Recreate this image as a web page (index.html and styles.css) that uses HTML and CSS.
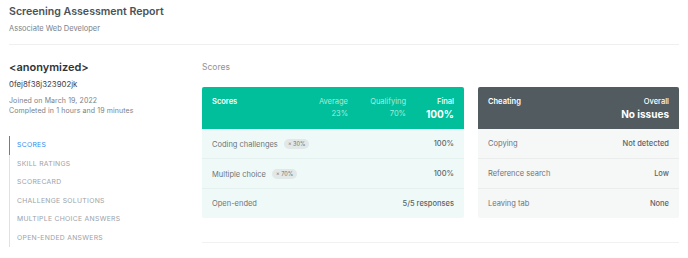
FILE: index.html
```html
<!DOCTYPE html>
<html lang="en">
<head>
    <meta charset="UTF-8">
    <meta name="viewport" content="width=device-width, initial-scale=1.0">
    <title>Screening Assessment Report</title>
    <link rel="stylesheet" href="styles.css">
</head>
<body>
    <div class="header">
        <h1>Screening Assessment Report</h1>
        <div class="role">Associate Web Developer</div>
    </div>

    <div class="main">
        <div class="sidebar">
            <div class="candidate">&lt;anonymized&gt;</div>
            <div class="candidate-id">0fej8f38j323902jk</div>
            <div class="meta">Joined on March 19, 2022</div>
            <div class="meta">Completed in 1 hours and 19 minutes</div>

            <ul class="nav">
                <li class="active">Scores</li>
                <li>Skill ratings</li>
                <li>Scorecard</li>
                <li>Challenge solutions</li>
                <li>Multiple choice answers</li>
                <li>Open-ended answers</li>
            </ul>
        </div>

        <div class="content">
            <div class="section-title">Scores</div>
            <div class="cards">
                <div class="card card-scores">
                    <div class="card-head">
                        <div class="head-label">Scores</div>
                        <div class="head-col">
                            <div>Average</div>
                            <div>23%</div>
                        </div>
                        <div class="head-col">
                            <div>Qualifying</div>
                            <div>70%</div>
                        </div>
                        <div class="head-col final">
                            <div>Final</div>
                            <div class="big">100%</div>
                        </div>
                    </div>
                    <div class="row">
                        <span>Coding challenges <span class="badge">× 30%</span></span>
                        <span class="value">100%</span>
                    </div>
                    <div class="row">
                        <span>Multiple choice <span class="badge">× 70%</span></span>
                        <span class="value">100%</span>
                    </div>
                    <div class="row">
                        <span>Open-ended</span>
                        <span class="value">5/5 responses</span>
                    </div>
                </div>

                <div class="card card-cheating">
                    <div class="card-head">
                        <div class="head-label">Cheating</div>
                        <div class="head-col final">
                            <div>Overall</div>
                            <div class="big">No issues</div>
                        </div>
                    </div>
                    <div class="row">
                        <span>Copying</span>
                        <span class="value">Not detected</span>
                    </div>
                    <div class="row">
                        <span>Reference search</span>
                        <span class="value">Low</span>
                    </div>
                    <div class="row">
                        <span>Leaving tab</span>
                        <span class="value">None</span>
                    </div>
                </div>
            </div>
            <div class="divider"></div>
        </div>
    </div>
</body>
</html>
```

FILE: styles.css
```css
body {
    margin: 0;
    padding: 0 9px;
    font-family: Inter, "Noto Sans", sans-serif;
    color: #4b5257;
    background: white;
}
.header {
    padding-top: 4px;
    padding-bottom: 10px;
    border-bottom: 1px solid #eeeff0;
    width: 670px;
}
h1 {
    margin: 0;
    font-size: 10.6px;
    line-height: 15px;
    font-weight: 600;
    color: #4b5257;
}
.role {
    margin-top: 5px;
    font-size: 7.5px;
    line-height: 10px;
    color: #7b8187;
}
.main {
    display: flex;
}
.sidebar {
    width: 193px;
    padding-top: 15px;
}
.candidate {
    font-size: 11px;
    line-height: 15px;
    font-weight: 600;
    color: #2f3438;
}
.candidate-id {
    margin-top: 4px;
    margin-bottom: 6px;
    font-size: 7.8px;
    line-height: 11px;
    color: #3d4247;
}
.meta {
    font-size: 7px;
    line-height: 10px;
    letter-spacing: 0.1px;
    color: #7b8187;
}
.nav {
    list-style: none;
    margin: 20px 0 0;
    padding: 0;
    border-left: 1px solid #dfe2e4;
}
.nav li {
    padding: 0 0 0 7px;
    height: 18.5px;
    line-height: 18.5px;
    font-size: 6.8px;
    text-transform: uppercase;
    letter-spacing: 0.3px;
    color: #9ca1a6;
}
.nav li.active {
    color: #2f8cf0;
    border-left: 1px solid #2f8cf0;
    margin-left: -1px;
}
.content {
    width: 477px;
    padding-top: 16px;
}
.section-title {
    font-size: 8.5px;
    line-height: 12px;
    color: #8d9398;
}
.cards {
    display: flex;
    gap: 14px;
    margin-top: 14px;
}
.card {
    border-radius: 2px;
    overflow: hidden;
    font-size: 7.5px;
}
.card-scores {
    width: 262px;
    background: #effaf8;
}
.card-cheating {
    width: 201px;
    background: #f6f7f7;
}
.card-head {
    display: flex;
    align-items: flex-start;
    padding: 9px 10px 9px;
    height: 24px;
    color: white;
    line-height: 12px;
}
.card-scores .card-head {
    background: #00bf9a;
}
.card-cheating .card-head {
    background: #515b60;
}
.head-label {
    flex: 1;
    font-weight: 600;
}
.head-col {
    width: 58px;
    text-align: right;
    color: #a8ebdc;
}
.final {
    width: 48px;
    color: white;
    font-weight: 500;
}
.card-cheating .final {
    width: auto;
}
.big {
    font-size: 10px;
    font-weight: 700;
}
.row {
    display: flex;
    justify-content: space-between;
    align-items: center;
    height: 29px;
    padding: 0 10px;
    border-top: 1px solid #e4f1ee;
    color: #6d7479;
}
.card-cheating .row {
    border-top-color: #ebecec;
}
.card-head + .row {
    border-top: none;
}
.value {
    font-weight: 500;
    color: #5d6469;
}
.badge {
    display: inline-block;
    margin-left: 4px;
    padding: 0 4px;
    height: 10px;
    line-height: 10px;
    border-radius: 5px;
    background: #e1e8e7;
    font-size: 5.5px;
    color: #6d7479;
    vertical-align: 1px;
}
.divider {
    margin-top: 24px;
    border-top: 1px solid #f0f1f2;
}
```
